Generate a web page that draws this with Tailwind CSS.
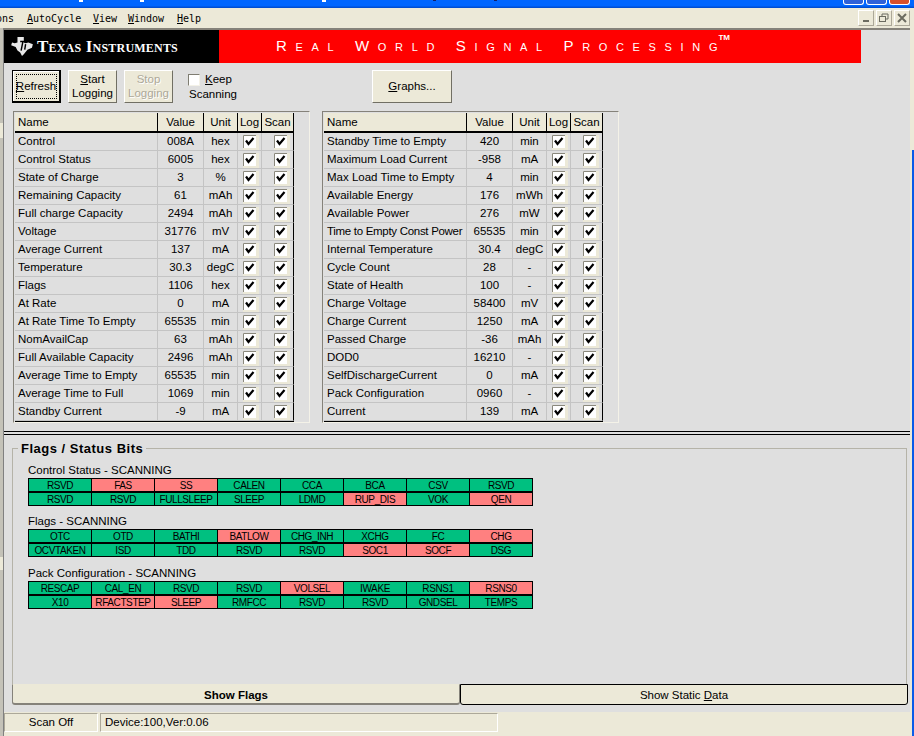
<!DOCTYPE html>
<html lang="en">
<head>
<meta charset="utf-8">
<title>Battery Monitor</title>
<script src="https://cdn.jsdelivr.net/npm/@tailwindcss/browser@4"></script>
</head>
<body class="relative w-[914px] h-[736px] overflow-hidden bg-[#0a5ce8] font-['Liberation_Sans',sans-serif] text-[11.5px] text-black">
    <!-- Title bar, only its lower edge is visible -->
    <div class="relative h-[8px] bg-linear-to-b from-[#0066ff] from-70% to-[#0048c8]">
        <span class="absolute left-[79px] top-0 w-[4px] h-[2px] bg-white"></span>
        <span class="absolute left-[140px] top-0 w-[4px] h-[2px] bg-white"></span>
        <span class="absolute left-[322px] top-0 w-[4px] h-[2px] bg-white"></span>
        <span class="absolute left-[433px] top-0 w-[3px] h-[1px] bg-[#10206a]"></span>
        <span class="absolute left-[494px] top-0 w-[3px] h-[1px] bg-[#10206a]"></span>
        <div class="absolute left-[843px] top-0 flex gap-[2px]">
            <div class="w-[21px] h-[5px] bg-[#2f62d8] rounded-b-[3px] border border-t-0 border-white"></div>
            <div class="w-[21px] h-[5px] bg-[#2f62d8] rounded-b-[3px] border border-t-0 border-white"></div>
            <div class="w-[21px] h-[5px] bg-[#d8502a] rounded-b-[3px] border border-t-0 border-white"></div>
        </div>
    </div>

    <!-- Menu bar -->
    <div class="flex items-center justify-between h-[20px] pr-[4px] bg-[#ece9d8]">
        <div class="flex pt-[1px] font-['DejaVu_Sans_Mono',monospace] text-[10px] -ml-[4px]">
            <span class="w-[31px]">ons</span>
            <span class="w-[66px]"><u>A</u>utoCycle</span>
            <span class="w-[35px]"><u>V</u>iew</span>
            <span class="w-[49px]"><u>W</u>indow</span>
            <span><u>H</u>elp</span>
        </div>
        <div class="flex gap-[2px]">
            <div class="flex items-center justify-center w-[16px] h-[16px] bg-[#ece9d8] border border-[#fff] border-r-[#aca899] border-b-[#aca899]"><svg width="10" height="10"><rect x="2" y="7" width="6" height="2" fill="#6b6b60"/></svg></div>
            <div class="flex items-center justify-center w-[16px] h-[16px] bg-[#ece9d8] border border-[#fff] border-r-[#aca899] border-b-[#aca899]"><svg width="10" height="10" fill="none" stroke="#6b6b60"><rect x="0.5" y="3.5" width="6" height="5"/><path d="M3 3V1H9V6H7"/></svg></div>
            <div class="flex items-center justify-center w-[16px] h-[16px] bg-[#ece9d8] border border-[#fff] border-r-[#aca899] border-b-[#aca899]"><svg width="10" height="10" stroke="#6b6b60" stroke-width="2"><path d="M1 1L9 9M9 1L1 9"/></svg></div>
        </div>
    </div>

    <div class="flex w-[912px] h-[708px] bg-[#ece9d8]">
        <!-- Left window edge -->
        <div class="flex flex-col w-[4px] bg-[#c4c2b8] border-r border-r-[#808080]">
            <div class="h-[95px]"></div>
            <div class="h-[15px] bg-[#ece9d8]"></div>
            <div class="h-[419px]"></div>
            <div class="h-[13px] bg-[#ece9d8]"></div>
        </div>

        <div class="flex flex-col w-[906px] bg-[#dfdfdf] border-t-2 border-t-[#85827a]">
            <!-- Banner -->
            <div class="flex w-[857px] h-[33px] shrink-0">
                <div class="flex items-center w-[215px] bg-black text-white pl-[7px]">
                    <svg width="22" height="19" viewBox="0 0 24 21" class="shrink-0">
                        <path d="M7 0H14V6L16 7 19 6 24 8 23 12 18 14 14 19 12 21 10 17 7 15 5 11 0 9 1 6 4 7 7 6Z" fill="#e8e8e8"/>
                        <path d="M10 5H17M13 5L11 15" stroke="#000" stroke-width="1.6" fill="none"/>
                        <path d="M16 8L15 14" stroke="#000" stroke-width="1.6" fill="none"/>
                    </svg>
                    <span class="ml-[4px] font-['Liberation_Serif',serif] font-bold text-[17px] [font-variant:small-caps] tracking-[0.2px] whitespace-nowrap">Texas Instruments</span>
                </div>
                <div class="flex flex-1 items-center bg-[#ff0000] text-white pl-[57px]">
                    <span class="[font-variant:small-caps] text-[15px] tracking-[8.65px] whitespace-nowrap">Real World Signal Processin<span class="tracking-normal">g</span></span>
                    <span class="self-start mt-[3px] ml-[1px] text-[8px] font-bold leading-[9px]">TM</span>
                </div>
            </div>

            <!-- Toolbar -->
            <div class="flex items-start h-[40px] pl-[8px] pt-[7px] shrink-0">
                <button class="flex items-center justify-center w-[49px] h-[33px] bg-[#ece9d8] border border-r-2 border-b-2 border-black shadow-[inset_1px_1px_0_#fff] mr-[7px]"><span class="flex items-center justify-center w-[41px] h-[25px] pt-[1px] border border-dotted border-black"><span><u>R</u>efresh</span></span></button>
                <button class="w-[49px] h-[33px] pb-[2px] bg-[#ece9d8] border border-white border-r-[#716f64] border-b-[#716f64] leading-[14px] mr-[7px]"><u>S</u>tart<br>Logging</button>
                <button class="w-[49px] h-[33px] pb-[2px] bg-[#ece9d8] border border-white border-r-[#716f64] border-b-[#716f64] leading-[14px] text-[#aca899] [text-shadow:1px_1px_0_#fff]">Stop<br>Logging</button>
                <div class="w-[150px] ml-[15px] pt-[3px]">
                    <div class="flex items-center h-[13px] gap-[5px]">
                        <span class="w-[12px] h-[12px] bg-white border border-[#7f7d72] border-r-[#f4f2e8] border-b-[#f4f2e8]"></span>
                        <span><u>K</u>eep</span>
                    </div>
                    <div class="ml-[1px] leading-[16px]">Scanning</div>
                </div>
                <button class="w-[80px] h-[33px] ml-[34px] bg-[#ece9d8] border border-white border-r-[#716f64] border-b-[#716f64]"><u>G</u>raphs...</button>
            </div>

            <!-- Register tables -->
            <div class="flex gap-[12px] pl-[9px] pt-[8px] shrink-0" id="tables"></div>

            <!-- Splitter -->
            <div class="h-[4px] mt-[8px] border-y border-y-black shrink-0"></div>

            <!-- Flags -->
            <div class="relative flex-1 ml-[8px] mr-[3px] mt-[13px] border border-[#b5b3a8] border-b-0 pl-[15px]">
                <div class="absolute -top-[8px] left-[5px] px-[3px] bg-[#dfdfdf] font-bold text-[13px] tracking-[0.5px] leading-[16px]">Flags / Status Bits</div>
                <div id="flags" class="pt-[14px] flex flex-col gap-[8px]"></div>
            </div>

            <!-- Tabs -->
            <div class="flex h-[21px] ml-[8px] mr-[2px] shrink-0">
                <div class="w-[448px] flex items-center justify-center pt-[4px] bg-[#ece9d8] font-bold border border-[#85827a] border-t-[#ece9d8] border-b-2 rounded-b-[3px]">Show Flags</div>
                <div class="w-[448px] flex items-center justify-center pt-[3px] bg-[#ece9d8] border border-black rounded-b-[3px]"><span>Show Static <u>D</u>ata</span></div>
            </div>

            <!-- Status bar -->
            <div class="flex gap-[2px] h-[24px] mt-[7px] pt-[1px] bg-[#ece9d8] shrink-0">
                <div class="flex items-center justify-center w-[94px] h-[19px] border border-[#aca899] border-r-white border-b-white">Scan Off</div>
                <div class="flex items-center w-[398px] h-[19px] pl-[4px] border border-[#aca899] border-r-white border-b-white">Device:100,Ver:0.06</div>
            </div>
        </div>
    </div>

    <!-- Upper part of the right window edge -->
    <div class="absolute left-[912px] top-[28px] w-[2px] h-[122px] bg-[#ece9d8]"></div>

    <script>
        const tables = [
            [["Control","008A","hex"],["Control Status","6005","hex"],["State of Charge","3","%"],["Remaining Capacity","61","mAh"],["Full charge Capacity","2494","mAh"],["Voltage","31776","mV"],["Average Current","137","mA"],["Temperature","30.3","degC"],["Flags","1106","hex"],["At Rate","0","mA"],["At Rate Time To Empty","65535","min"],["NomAvailCap","63","mAh"],["Full Available Capacity","2496","mAh"],["Average Time to Empty","65535","min"],["Average Time to Full","1069","min"],["Standby Current","-9","mA"]],
            [["Standby Time to Empty","420","min"],["Maximum Load Current","-958","mA"],["Max Load Time to Empty","4","min"],["Available Energy","176","mWh"],["Available Power","276","mW"],["Time to Empty Const Power","65535","min"],["Internal Temperature","30.4","degC"],["Cycle Count","28","-"],["State of Health","100","-"],["Charge Voltage","58400","mV"],["Charge Current","1250","mA"],["Passed Charge","-36","mAh"],["DOD0","16210","-"],["SelfDischargeCurrent","0","mA"],["Pack Configuration","0960","-"],["Current","139","mA"]]
        ];

        const box = `<svg width="16" height="15" class="shrink-0"><rect width="16" height="15" fill="#ece9d8"/><rect width="13" height="13" fill="#fff"/><path d="M0.5 13V0.5H13" stroke="#8a887c" fill="none"/><path d="M3 5.5L5.5 9 10.5 3" stroke="#000" stroke-width="2.2" fill="none"/></svg>`;
        const logBox = `<div class="flex pl-[5px] pt-[2px] border-r border-r-[#c4c4c4] border-b border-b-[#c4c4c4]">${box}</div>`;
        const scanBox = `<div class="flex pl-[12px] pt-[2px] border-r border-r-black border-b border-b-[#c4c4c4]">${box}</div>`;

        const cell = 'flex items-center pt-[1px] border-r border-r-[#c4c4c4] border-b border-b-[#c4c4c4]';
        const head = 'flex items-center justify-center pt-[2px] bg-[#ece9d8] border-r border-r-black border-b-2 border-b-black';

        document.getElementById('tables').innerHTML = tables.map(rows => `
            <div class="w-[297px] h-[312px] p-[1px] border border-[#85827a] border-r-[#f4f2e8] border-b-[#f4f2e8]">
                <div class="grid grid-cols-[143px_46px_34px_24px_32px] grid-rows-[20px_repeat(16,18px)] w-[279px] border-b border-b-black">
                    <div class="${head} !justify-start pl-[3px]">Name</div>
                    <div class="${head}">Value</div>
                    <div class="${head}">Unit</div>
                    <div class="${head}">Log</div>
                    <div class="${head}">Scan</div>
                    ${rows.map(r => `
                        <div class="${cell} pl-[3px] whitespace-nowrap ${r[0].length > 24 ? 'tracking-[-0.3px]' : ''}">${r[0]}</div>
                        <div class="${cell} justify-center">${r[1]}</div>
                        <div class="${cell} justify-center">${r[2]}</div>
                        ${logBox}${scanBox}
                    `).join('')}
                </div>
            </div>
        `).join('');

        // 1 = green (clear), 0 = red (set)
        const groups = [
            ["Control Status - SCANNING", [
                [["RSVD",1],["FAS",0],["SS",0],["CALEN",1],["CCA",1],["BCA",1],["CSV",1],["RSVD",1]],
                [["RSVD",1],["RSVD",1],["FULLSLEEP",1],["SLEEP",1],["LDMD",1],["RUP_DIS",0],["VOK",1],["QEN",0]]
            ]],
            ["Flags - SCANNING", [
                [["OTC",1],["OTD",1],["BATHI",1],["BATLOW",0],["CHG_INH",1],["XCHG",1],["FC",1],["CHG",0]],
                [["OCVTAKEN",1],["ISD",1],["TDD",1],["RSVD",1],["RSVD",1],["SOC1",0],["SOCF",0],["DSG",1]]
            ]],
            ["Pack Configuration - SCANNING", [
                [["RESCAP",1],["CAL_EN",1],["RSVD",1],["RSVD",1],["VOLSEL",0],["IWAKE",1],["RSNS1",1],["RSNS0",0]],
                [["X10",1],["RFACTSTEP",0],["SLEEP",0],["RMFCC",1],["RSVD",1],["RSVD",1],["GNDSEL",1],["TEMPS",1]]
            ]]
        ];

        document.getElementById('flags').innerHTML = groups.map(([title, rows]) => `
            <div class="last:mt-[1px]">
                <div class="h-[15px] leading-[15px]">${title}</div>
                <div class="w-[505px]">
                    ${rows.map(row => `
                        <div class="grid grid-cols-[64px_repeat(7,63px)] h-[14px]">
                            ${row.map(([name, ok]) => `<div class="flex items-center justify-center pt-[1px] text-[10px] tracking-[-0.4px] leading-[11px] whitespace-nowrap border-y border-r first:border-l border-black ${ok ? 'bg-[#00c080]' : 'bg-[#ff8080]'}">${name}</div>`).join('')}
                        </div>
                    `).join('')}
                </div>
            </div>
        `).join('');
    </script>
</body>
</html>
